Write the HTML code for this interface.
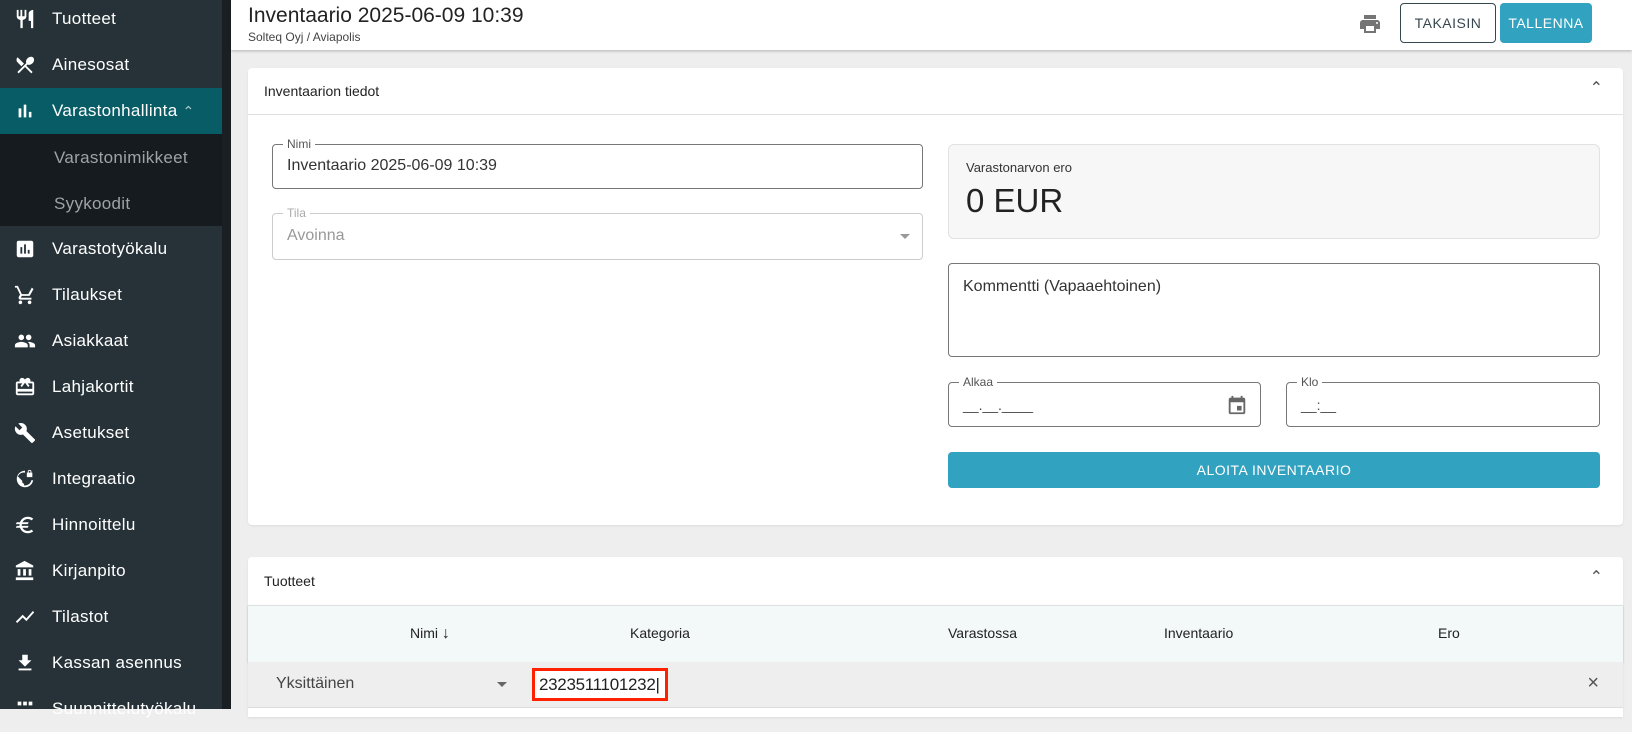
<!DOCTYPE html>
<html><head><meta charset="utf-8"><style>
*{box-sizing:border-box;margin:0;padding:0}
body{width:1632px;height:709px;overflow:hidden;background:#eeeeee;font-family:"Liberation Sans","DejaVu Sans",sans-serif;position:relative;color:#212121}
.sb{position:absolute;left:0;top:0;width:222px;height:709px;background:#263238}
.strip{position:absolute;left:222px;top:0;width:9px;height:709px;background:#1a1f23}
.it{position:absolute;left:0;width:222px;height:46px;color:#fff;font-size:17px;letter-spacing:.3px}
.it span{position:absolute;left:52px;top:13px}
.it svg{position:absolute;left:14px;top:12px;width:22px;height:22px;fill:#fff}
.act{background:#075c66}
.sub{position:absolute;left:0;top:134px;width:222px;height:92px;background:#161b1f}
.sub div{position:absolute;left:54px;color:#9ea3a6;font-size:17px;letter-spacing:.3px}
.hdr{position:absolute;left:231px;top:0;right:0;height:50px;background:#fff;box-shadow:0 1px 3px rgba(0,0,0,.25)}
.card{position:absolute;left:248px;width:1375px;background:#fff;border-radius:4px;box-shadow:0 1px 2px rgba(0,0,0,.08)}
.fld{position:absolute;border:1px solid #777;border-radius:4px}
.lbl{position:absolute;top:-8px;left:10px;background:#fff;padding:0 4px;font-size:12px;color:#555}
.btn{position:absolute;border-radius:4px;font-size:14px;text-align:center;letter-spacing:.5px}
</style></head><body>
<div class="sb">
 <div class="it" style="top:-4px"><svg viewBox="0 0 24 24"><path d="M11 9H9V2H7v7H5V2H3v7c0 2.1 1.7 3.8 4 4v9h2.5v-9c2.3-.2 4-1.9 4-4V2h-2v7zm5-3v8h2.5v8H21V2c-2.8 0-5 2.2-5 4z"/></svg><span>Tuotteet</span></div>
 <div class="it" style="top:42px"><svg viewBox="0 0 24 24"><path d="M8.1 13.3l2.8-2.8L3.9 3.5a4 4 0 000 5.7l4.2 4.1zm6.8-1.8c1.5.7 3.7.2 5.3-1.4 1.900-1.9 2.3-4.7.8-6.2-1.4-1.4-4.2-1.1-6.2.8-1.6 1.6-2.1 3.8-1.4 5.3L3.7 19.7l1.4 1.4L12 14.2l6.9 6.9 1.4-1.4L13.4 12.8l1.5-1.3z"/></svg><span>Ainesosat</span></div>
 <div class="it act" style="top:88px"><svg viewBox="0 0 24 24"><path d="M5 9.2h3V19H5zM10.6 5h2.8v14h-2.8zm5.6 8H19v6h-2.8z"/></svg><span>Varastonhallinta <span style="position:static;color:#aac8cc;font-size:14px">&#8963;</span></span></div>
 <div class="sub"><div style="top:14px">Varastonimikkeet</div><div style="top:60px">Syykoodit</div></div>
 <div class="it" style="top:226px"><svg viewBox="0 0 24 24"><path d="M19 3H5c-1.1 0-2 .9-2 2v14c0 1.1.9 2 2 2h14c1.1 0 2-.9 2-2V5c0-1.1-.9-2-2-2zM9 17H7v-7h2v7zm4 0h-2V7h2v10zm4 0h-2v-4h2v4z"/></svg><span>Varastotyökalu</span></div>
 <div class="it" style="top:272px"><svg viewBox="0 0 24 24"><path d="M7 18c-1.1 0-2 .9-2 2s.9 2 2 2 2-.9 2-2-.9-2-2-2zM1 2v2h2l3.6 7.6-1.4 2.4C5.1 14.3 5 14.7 5 15c0 1.1.9 2 2 2h12v-2H7.4l1.1-2h7.5c.8 0 1.4-.4 1.7-1l3.6-6.5L19.4 4 15.6 11H8.5L4.3 2H1zm16 16c-1.1 0-2 .9-2 2s.9 2 2 2 2-.9 2-2-.9-2-2-2z"/></svg><span>Tilaukset</span></div>
 <div class="it" style="top:318px"><svg viewBox="0 0 24 24"><path d="M16 11c1.7 0 3-1.3 3-3s-1.3-3-3-3-3 1.3-3 3 1.3 3 3 3zm-8 0c1.7 0 3-1.3 3-3S9.7 5 8 5 5 6.3 5 8s1.3 3 3 3zm0 2c-2.3 0-7 1.2-7 3.5V19h14v-2.5C15 14.2 10.3 13 8 13zm8 0c-.3 0-.6 0-1 .1 1.2.8 2 2 2 3.4V19h6v-2.5c0-2.3-4.7-3.5-7-3.5z"/></svg><span>Asiakkaat</span></div>
 <div class="it" style="top:364px"><svg viewBox="0 0 24 24"><path d="M20 6h-2.2c.1-.3.2-.7.2-1 0-1.7-1.3-3-3-3-1 0-1.9.5-2.5 1.3L12 4l-.5-.7C10.9 2.5 10 2 9 2 7.3 2 6 3.3 6 5c0 .3.1.7.2 1H4c-1.1 0-2 .9-2 2v11c0 1.1.9 2 2 2h16c1.1 0 2-.9 2-2V8c0-1.1-.9-2-2-2zm0 13H4v-2h16v2zm0-5H4V8h5.1L7 10.8 8.6 12 12 7.4l3.4 4.6 1.6-1.2L14.9 8H20v6z"/></svg><span>Lahjakortit</span></div>
 <div class="it" style="top:410px"><svg viewBox="0 0 24 24"><path d="M22.7 19l-9.1-9.1c.9-2.3.4-5-1.5-6.9-2-2-5-2.4-7.4-1.3L9 6 6 9 1.6 4.7C.4 7.1.9 10.1 2.9 12.1c1.9 1.9 4.6 2.4 6.9 1.5l9.1 9.1c.4.4 1 .4 1.4 0l2.3-2.3c.5-.4.5-1.1.1-1.4z"/></svg><span>Asetukset</span></div>
 <div class="it" style="top:456px"><svg viewBox="0 0 24 24"><path d="M12 3a9 9 0 100 18 9 9 0 008.9-7.6h-2A7 7 0 0111 19v-2a2 2 0 01-2-2v-1L4.2 9.2A7 7 0 0112 5V3zm5-1a2 2 0 00-2 2v1h-1v5h6V5h-1V4a2 2 0 00-2-2zm0 1a1 1 0 011 1v1h-2V4a1 1 0 011-1z"/></svg><span>Integraatio</span></div>
 <div class="it" style="top:502px"><svg viewBox="0 0 24 24"><path d="M15 18.5c-2.5 0-4.7-1.4-5.8-3.5H15l1-2H8.6c0-.3-.1-.7-.1-1s0-.7.1-1H15l1-2H9.2C10.3 6.9 12.5 5.5 15 5.5c1.6 0 3.1.6 4.2 1.5L21 5.2C19.4 3.8 17.3 3 15 3c-3.9 0-7.3 2.5-8.5 6H3l-1 2h4.1c0 .3-.1.7-.1 1s0 .7.1 1H3l-1 2h4.5c1.2 3.5 4.6 6 8.5 6 2.3 0 4.4-.8 6-2.2L19.2 17c-1.1.9-2.6 1.5-4.2 1.5z"/></svg><span>Hinnoittelu</span></div>
 <div class="it" style="top:548px"><svg viewBox="0 0 24 24"><path d="M4 10v7h3v-7H4zm6 0v7h3v-7h-3zM2 22h19v-3H2v3zm14-12v7h3v-7h-3zM11.5 1L2 6v2h19V6l-9.5-5z"/></svg><span>Kirjanpito</span></div>
 <div class="it" style="top:594px"><svg viewBox="0 0 24 24"><path d="M3.5 18.5l6-6 4 4L22 6.9 20.6 5.5l-7.1 8-4-4L2 17z"/></svg><span>Tilastot</span></div>
 <div class="it" style="top:640px"><svg viewBox="0 0 24 24"><path d="M19 9h-4V3H9v6H5l7 7 7-7zM5 18v2h14v-2H5z"/></svg><span>Kassan asennus</span></div>
 <div class="it" style="top:686px"><svg viewBox="0 0 24 24"><path d="M4 8h4V4H4v4zm6 0h4V4h-4v4zm6-4v4h4V4h-4z"/></svg><span>Suunnittelutyökalu</span></div>
</div>
<div class="strip"></div>
<div class="hdr">
 <div style="position:absolute;left:17px;top:4px;font-size:21px;color:#222">Inventaario 2025-06-09 10:39</div>
 <div style="position:absolute;left:17px;top:30px;font-size:12px;color:#444">Solteq Oyj / Aviapolis</div>
 <svg style="position:absolute;left:1127px;top:12px" width="24" height="24" viewBox="0 0 24 24" fill="#757575"><path d="M19 8H5c-1.7 0-3 1.3-3 3v6h4v4h12v-4h4v-6c0-1.7-1.3-3-3-3zm-3 11H8v-5h8v5zm3-7c-.6 0-1-.4-1-1s.4-1 1-1 1 .4 1 1-.4 1-1 1zm-1-9H6v4h12V3z"/></svg>
 <div class="btn" style="left:1169px;top:3px;width:96px;height:40px;border:1px solid #37474f;line-height:38px;color:#37474f">TAKAISIN</div>
 <div class="btn" style="left:1269px;top:3px;width:92px;height:40px;background:#31a2bf;line-height:40px;color:#fff">TALLENNA</div>
</div>
<div class="card" style="top:68px;height:457px">
 <div style="position:absolute;left:16px;top:15px;font-size:14px;color:#222">Inventaarion tiedot</div>
 <div style="position:absolute;right:20px;top:10px;font-size:16px;color:#555">&#8963;</div>
 <div style="position:absolute;left:0;right:0;top:46px;border-top:1px solid #e0e0e0"></div>
 <div class="fld" style="left:24px;top:76px;width:651px;height:45px"><div class="lbl">Nimi</div><div style="position:absolute;left:14px;top:12px;font-size:16px;color:#333">Inventaario 2025-06-09 10:39</div></div>
 <div class="fld" style="left:24px;top:145px;width:651px;height:47px;border-color:#ccc"><div class="lbl" style="color:#aaa">Tila</div><div style="position:absolute;left:14px;top:13px;font-size:16px;color:#999">Avoinna</div><div style="position:absolute;right:12px;top:20px;border:5px solid transparent;border-top-color:#999;border-bottom:0"></div></div>
 <div style="position:absolute;left:700px;top:76px;width:652px;height:95px;background:#f7f7f7;border:1px solid #e2e2e2;border-radius:6px">
  <div style="position:absolute;left:17px;top:15px;font-size:13px;color:#333">Varastonarvon ero</div>
  <div style="position:absolute;left:17px;top:37px;font-size:33px;color:#222">0 EUR</div></div>
 <div class="fld" style="left:700px;top:195px;width:652px;height:94px"><div style="position:absolute;left:14px;top:14px;font-size:16px;color:#333">Kommentti (Vapaaehtoinen)</div></div>
 <div class="fld" style="left:700px;top:314px;width:313px;height:45px"><div class="lbl">Alkaa</div><div style="position:absolute;left:14px;top:14px;font-size:14px;color:#444">__.__.____</div>
  <svg style="position:absolute;right:12px;top:11px" width="22" height="22" viewBox="0 0 24 24" fill="#666"><path d="M19 4h-1V2h-2v2H8V2H6v2H5c-1.1 0-2 .9-2 2v14c0 1.1.9 2 2 2h14c1.1 0 2-.9 2-2V6c0-1.1-.9-2-2-2zm0 16H5V9h14v11zm-7-7h5v5h-5z"/></svg></div>
 <div class="fld" style="left:1038px;top:314px;width:314px;height:45px"><div class="lbl">Klo</div><div style="position:absolute;left:14px;top:14px;font-size:14px;color:#444">__:__</div></div>
 <div class="btn" style="left:700px;top:384px;width:652px;height:36px;background:#31a2bf;color:#fff;line-height:36px;font-size:14px">ALOITA INVENTAARIO</div>
</div>
<div class="card" style="top:557px;height:160px;border-radius:4px 4px 0 0">
 <div style="position:absolute;left:16px;top:16px;font-size:14px;color:#222">Tuotteet</div>
 <div style="position:absolute;right:20px;top:10px;font-size:16px;color:#555">&#8963;</div>
 <div style="position:absolute;left:0;right:0;top:48px;height:57px;background:#f3f8f8;border-top:1px solid #e0e0e0;box-shadow:0 1px 2px rgba(0,0,0,.2);font-size:14px;color:#222">
  <div style="position:absolute;left:162px;top:19px">Nimi <span style="font-size:16px">&#8595;</span></div>
  <div style="position:absolute;left:382px;top:19px">Kategoria</div>
  <div style="position:absolute;left:700px;top:19px">Varastossa</div>
  <div style="position:absolute;left:916px;top:19px">Inventaario</div>
  <div style="position:absolute;left:1190px;top:19px">Ero</div>
 </div>
 <div style="position:absolute;left:0;right:0;top:105px;height:46px;background:#eeeeee;border-bottom:1px solid #ddd">
  <div style="position:absolute;left:28px;top:13px;font-size:16px;color:#444">Yksittäinen</div>
  <div style="position:absolute;left:249px;top:20px;border:5px solid transparent;border-top-color:#666;border-bottom:0"></div>
  <div style="position:absolute;left:284px;top:6px;width:136px;height:33px;border:3px solid #ff2200;background:#fff"><div style="position:absolute;left:4px;top:4px;font-size:17px;color:#222;letter-spacing:-.3px">2323511101232|</div></div>
  <div style="position:absolute;right:24px;top:10px;font-size:20px;color:#555">&#215;</div>
 </div>
</div>
</body></html>
